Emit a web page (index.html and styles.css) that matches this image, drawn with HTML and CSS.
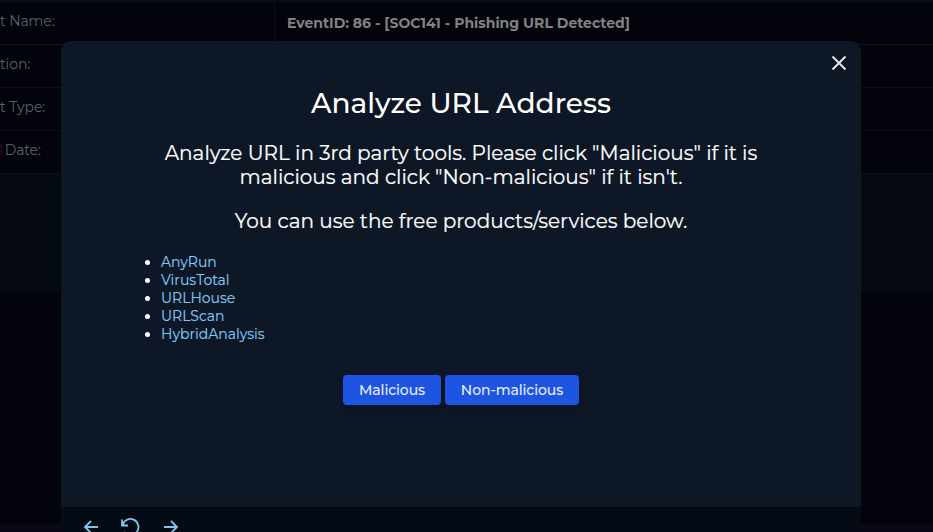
FILE: index.html
```html
<!DOCTYPE html>
<html lang="en">
<head>
<meta charset="utf-8">
<title>Analyze URL Address</title>
<link rel="stylesheet" href="styles.css">
</head>
<body>
<main class="page">
  <div class="details">
    <div class="row"><div class="label">t Name:</div><div class="value">EventID: 86 - [SOC141 - Phishing URL Detected]</div></div>
    <div class="row"><div class="label">tion:</div><div class="value"></div></div>
    <div class="row"><div class="label">t Type:</div><div class="value"></div></div>
    <div class="row"><div class="label"><span class="clip">l</span>Date:</div><div class="value"></div></div>
  </div>
  <div class="panel"></div>
  <div class="gap"></div>
  <div class="bottom"></div>
</main>
<section class="modal" role="dialog">
  <button class="close" aria-label="Close"><svg width="16" height="16" viewBox="0 0 16 16"><path d="M1.5 1.5l13 13M14.5 1.5l-13 13"/></svg></button>
  <div class="content">
    <h1>Analyze URL Address</h1>
    <p>Analyze URL in 3rd party tools. Please click "Malicious" if it is<br>malicious and click "Non-malicious" if it isn't.</p>
    <p>You can use the free products/services below.</p>
    <ul>
      <li><a>AnyRun</a></li>
      <li><a>VirusTotal</a></li>
      <li><a>URLHouse</a></li>
      <li><a>URLScan</a></li>
      <li><a>HybridAnalysis</a></li>
    </ul>
    <div class="actions"><button class="btn mal">Malicious</button><button class="btn non">Non-malicious</button></div>
  </div>
  <footer>
    <svg width="20" height="20" viewBox="0 0 20 20"><path d="M18 10H5M11 4l-6 6 6 6"/></svg>
    <svg width="20" height="20" viewBox="0 0 20 20"><path d="M2 2.5v6h6M2.7 8A8 8 0 1 1 4.2 15"/></svg>
    <svg class="next" width="20" height="20" viewBox="0 0 20 20"><path d="M3 10h13M10 4l6 6-6 6"/></svg>
  </footer>
</section>
</body>
</html>
```
FILE: styles.css
```css
* { box-sizing: border-box; }
html, body { margin: 0; height: 532px; overflow: hidden; }
body { background: #03030c; font-family: Montserrat, Inter, sans-serif; font-size: 14px; color: #fff; position: relative; }
.page { display: flex; flex-direction: column; height: 532px; }
.details { padding-top: 1px; background: #050a13; }
.row { display: flex; height: 43px; border-top: 1px solid #0d101b; background: #03030c; }
.label { width: 275px; border-right: 1px solid #0d101b; color: #596269; line-height: 38px; letter-spacing: -0.1px; white-space: nowrap; }
.value { padding-left: 12px; line-height: 42px; color: #828282; font-weight: 700; white-space: nowrap; }
.clip { color: #4a0a12; margin-left: -1px; margin-right: 2px; }
.panel { height: 119px; background: #050a11; border-top: 1px solid #0b1016; }
.gap { flex: 1; }
.bottom { height: 9px; background: #0a0817; }
.modal { position: absolute; left: 61px; top: 41px; width: 800px; height: 510px; border-radius: 10px; background: #0e1725; overflow: hidden; display: flex; flex-direction: column; }
button { font: inherit; border: 0; padding: 0; }
.close { position: absolute; left: 770px; top: 14px; width: 16px; height: 16px; background: none; }
svg { display: block; fill: none; stroke: #84c6ea; stroke-width: 1.8; }
.close svg { stroke: #e3e7eb; stroke-width: 2; }
.content { height: 466px; padding: 44px 84px 0; }
h1 { margin: 0; font-size: 28px; font-weight: 500; line-height: 36px; text-align: center; }
p { margin: 0; padding-top: 20px; font-size: 20px; line-height: 24px; text-align: center; white-space: nowrap; -webkit-text-stroke: 0.2px currentColor; }
ul { margin: 20px 0 0; padding: 0 0 0 16px; line-height: 18px; font-size: 14px; }
a { color: #7fcaf6; -webkit-text-stroke: 0.15px currentColor; }
.actions { display: flex; gap: 4px; justify-content: center; margin-top: 32px; }
.btn { height: 30px; border-radius: 4px; background: #1d55e2; color: #e8eefc; font-weight: 500; font-size: 14px; line-height: 30px; letter-spacing: -0.08px; box-shadow: 0 2px 6px #0003; }
.mal { width: 98px; }
.non { width: 134px; }
footer { flex: 1; background: #040b15; display: flex; gap: 20px; padding: 10px 0 0 19px; }
.next { margin-left: 1px; }
```
